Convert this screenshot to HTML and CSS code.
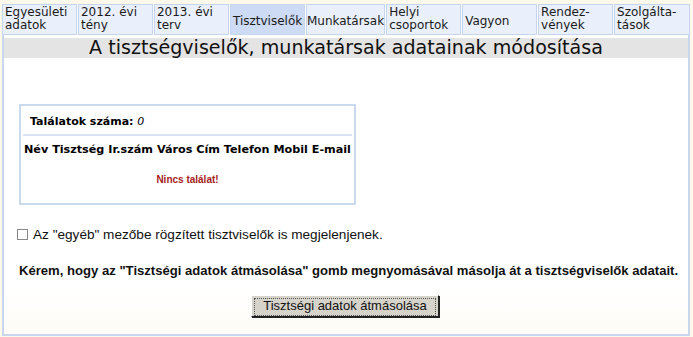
FILE: index.html
```html
<!DOCTYPE html>
<html>
  <head>
    <meta charset="UTF-8"/>
    <title>Tisztviselők</title>
    <link rel="stylesheet" href="styles.css">
  </head>
  <body>
    <div class="page">
      <ul class="tabs">
        <li>Egyesületi<br>adatok</li>
        <li>2012. évi<br>tény</li>
        <li>2013. évi<br>terv</li>
        <li class="single active">Tisztviselők</li>
        <li class="single wide">Munkatársak</li>
        <li>Helyi<br>csoportok</li>
        <li class="single">Vagyon</li>
        <li>Rendez-<br>vények</li>
        <li class="last">Szolgálta-<br>tások</li>
      </ul>

      <div class="panel">
        <h1 class="title">A tisztségviselők, munkatársak adatainak módosítása</h1>

        <div class="results">
          <div class="count">Találatok száma: <i>0</i></div>
          <div class="cols">Név Tisztség Ir.szám Város Cím Telefon Mobil E-mail</div>
          <div class="empty">Nincs találat!</div>
        </div>

        <label class="other"><span class="check"></span>Az "egyéb" mezőbe rögzített tisztviselők is megjelenjenek.</label>

        <p class="note">Kérem, hogy az "Tisztségi adatok átmásolása" gomb megnyomásával másolja át a tisztségviselők adatait.</p>

        <div class="actions">
          <button class="copy"><span>Tisztségi adatok átmásolása</span></button>
        </div>
      </div>
    </div>
  </body>
</html>
```

FILE: styles.css
```css
html, body { padding: 0; margin: 0; }
body {
    background: #fdf9ea;
    font-family: "DejaVu Sans", Verdana, sans-serif;
    width: 693px;
    height: 337px;
    overflow: hidden;
}
.page {
    padding: 4px 3px 0 2px;
}
.tabs {
    list-style: none;
    margin: 0;
    padding: 0;
    display: flex;
    gap: 1px;
    background: #fff;
}
.tabs li {
    width: 73px;
    height: 28px;
    padding: 1px 0 0 2px;
    background: #e9f0fb;
    border: 1px solid #c6d5ee;
    font-size: 12px;
    line-height: 13px;
    color: #1a1a1a;
    white-space: nowrap;
}
.tabs li.single {
    display: flex;
    align-items: center;
    padding-top: 4px;
    height: 25px;
}
.tabs li.active { background: #cddbf4; }
.tabs li.wide { width: 79px; padding-left: 0; }
.tabs li.last { width: 74px; }

.panel {
    background: linear-gradient(#fff 85%, #fffcf6);
    border: solid #c8d6ee;
    border-width: 0 2px 2px 2px;
    height: 301px;
    box-sizing: border-box;
    padding-top: 3px;
}
.title {
    margin: 0;
    background: #e4e4e4;
    font-weight: normal;
    font-size: 19.1px;
    line-height: 20px;
    text-align: center;
    color: #111;
}
.results {
    width: 337px;
    margin: 46px 0 0 15px;
    border: 2px solid #cbd9ef;
    height: 101px;
    box-sizing: border-box;
    padding: 0 2px;
}
.count {
    font-size: 11px;
    font-weight: bold;
    padding: 9px 0 0 7px;
    height: 19px;
    border-bottom: 2px solid #d8e3f4;
}
.count i { font-weight: normal; }
.cols {
    font-size: 11.2px;
    font-weight: bold;
    padding: 7px 0 0 1px;
    white-space: nowrap;
}
.empty {
    font-family: "Liberation Sans", Arial, sans-serif;
    font-size: 10px;
    font-weight: bold;
    color: #a51c1c;
    text-align: center;
    margin-top: 18px;
}
.other {
    display: flex;
    align-items: center;
    margin: 22px 0 0 13px;
    font-family: "Liberation Sans", Arial, sans-serif;
    font-size: 13.6px;
    color: #111;
}
.check {
    width: 9px;
    height: 9px;
    border: 1px solid #888;
    background: #fff;
    margin-right: 5px;
}
.note {
    margin: 21px 0 0 15px;
    font-family: "Liberation Sans", Arial, sans-serif;
    font-size: 13.1px;
    font-weight: bold;
    color: #111;
}
.actions {
    display: flex;
    justify-content: center;
    margin-top: 17px;
    padding-right: 2px;
}
.copy {
    width: 188px;
    height: 22px;
    padding: 2px;
    background: #d6d3cb;
    border: 1px solid;
    border-color: #fff #222 #222 #fff;
    box-shadow: 1px 1px 0 #222;
    font-family: "Liberation Sans", Arial, sans-serif;
    font-size: 13px;
    color: #111;
}
.copy span {
    display: block;
    height: 100%;
    border: 1px dotted #555;
    line-height: 14px;
}
```
